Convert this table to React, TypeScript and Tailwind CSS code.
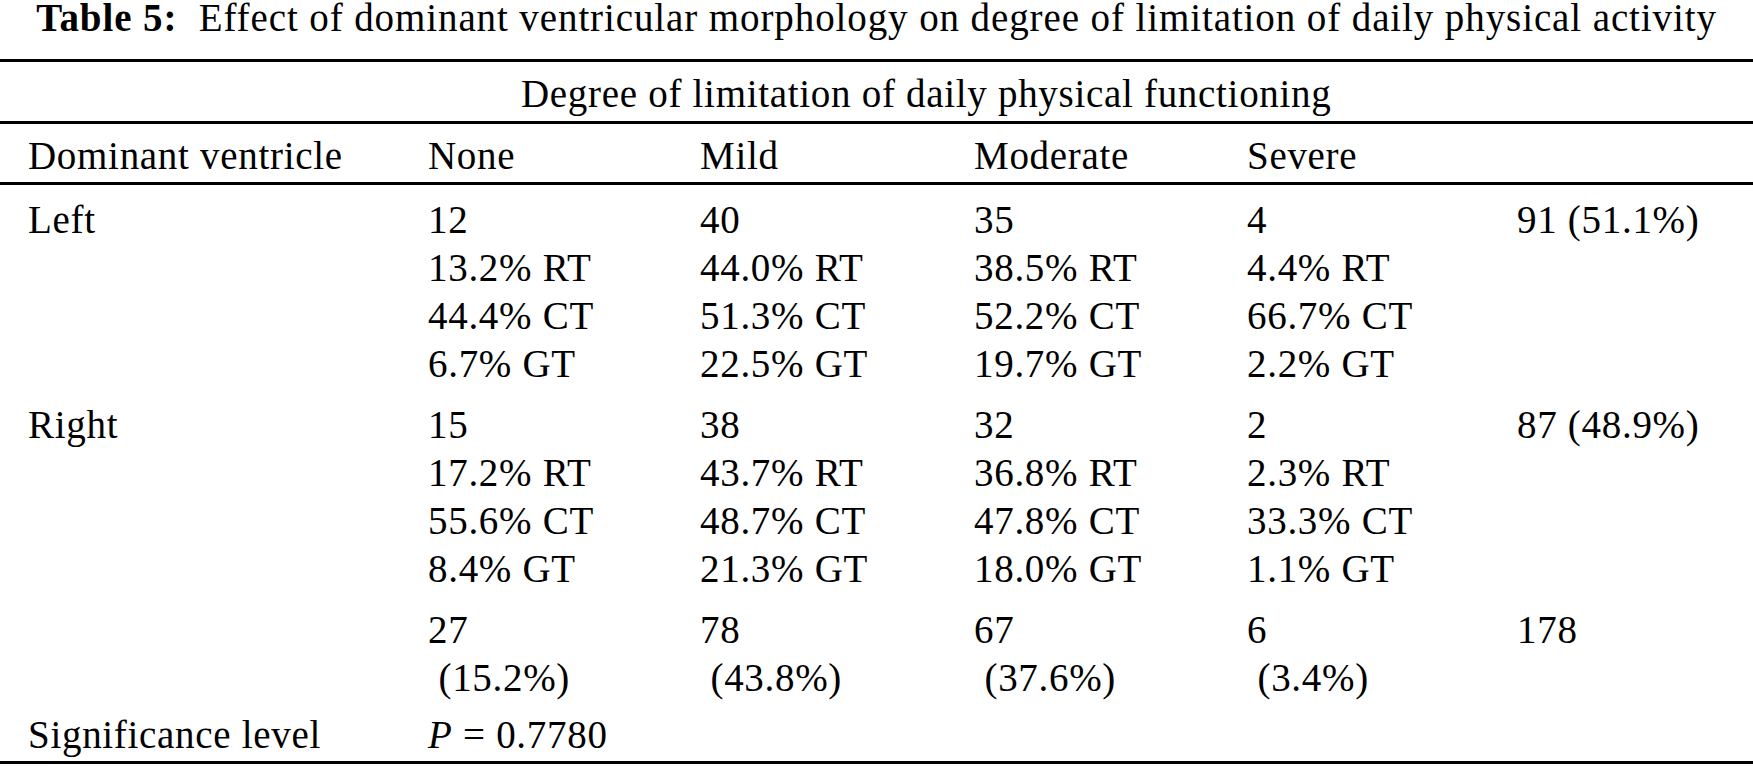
const cols = "grid grid-cols-[400px_272px_274px_273px_270px_1fr] pl-[28px]";

const groups = [
  {
    label: "Left",
    total: "91 (51.1%)",
    cells: [
      ["12", "13.2% RT", "44.4% CT", "6.7% GT"],
      ["40", "44.0% RT", "51.3% CT", "22.5% GT"],
      ["35", "38.5% RT", "52.2% CT", "19.7% GT"],
      ["4", "4.4% RT", "66.7% CT", "2.2% GT"],
    ],
  },
  {
    label: "Right",
    total: "87 (48.9%)",
    cells: [
      ["15", "17.2% RT", "55.6% CT", "8.4% GT"],
      ["38", "43.7% RT", "48.7% CT", "21.3% GT"],
      ["32", "36.8% RT", "47.8% CT", "18.0% GT"],
      ["2", "2.3% RT", "33.3% CT", "1.1% GT"],
    ],
  },
];

const totals = [
  ["27", "(15.2%)"],
  ["78", "(43.8%)"],
  ["67", "(37.6%)"],
  ["6", "(3.4%)"],
];

function Rule({ className = "" }: { className?: string }) {
  return <div className={"h-[3px] bg-black " + className} />;
}

export default function App() {
  return (
    <main className="w-[1753px] h-[766px] bg-white text-black overflow-hidden font-[family-name:Liberation_Serif,Times_New_Roman,serif] text-[39px] leading-[48px] tracking-[0.7px]">
      {/* caption */}
      <h1 className="pt-[2px] text-center leading-[32px] tracking-[0.9px] whitespace-nowrap">
        <span className="font-bold">Table 5:</span>
        {"\u00a0 "}Effect of dominant ventricular morphology on degree of limitation of daily physical activity
      </h1>

      <Rule className="mt-[25px]" />

      <div className={cols + " mt-[8px]"}>
        <div />
        <div className="col-span-5 pl-[93px] whitespace-nowrap">Degree of limitation of daily physical functioning</div>
      </div>

      <Rule className="mt-[3px]" />

      <div className={cols + " mt-[8px]"}>
        <div>Dominant ventricle</div>
        <div>None</div>
        <div>Mild</div>
        <div>Moderate</div>
        <div>Severe</div>
        <div />
      </div>

      <Rule className="mt-[2px]" />

      <div className="mt-[11px] flex flex-col gap-[13px]">
        {groups.map((g) => (
          <div key={g.label} className={cols}>
            <div>{g.label}</div>
            {g.cells.map((c, i) => (
              <div key={i} className="flex flex-col whitespace-nowrap">
                {c.map((t) => (
                  <span key={t}>{t}</span>
                ))}
              </div>
            ))}
            <div className="whitespace-nowrap">{g.total}</div>
          </div>
        ))}

        <div className={cols}>
          <div />
          {totals.map(([n, p]) => (
            <div key={n} className="flex flex-col whitespace-nowrap">
              <span>{n}</span>
              <span>{"\u00a0" + p}</span>
            </div>
          ))}
          <div>178</div>
        </div>
      </div>

      <div className={cols + " mt-[9px]"}>
        <div>Significance level</div>
        <div className="col-span-5 whitespace-nowrap">
          <i>P</i> = 0.7780
        </div>
      </div>

      <Rule className="mt-[2px]" />
    </main>
  );
}
